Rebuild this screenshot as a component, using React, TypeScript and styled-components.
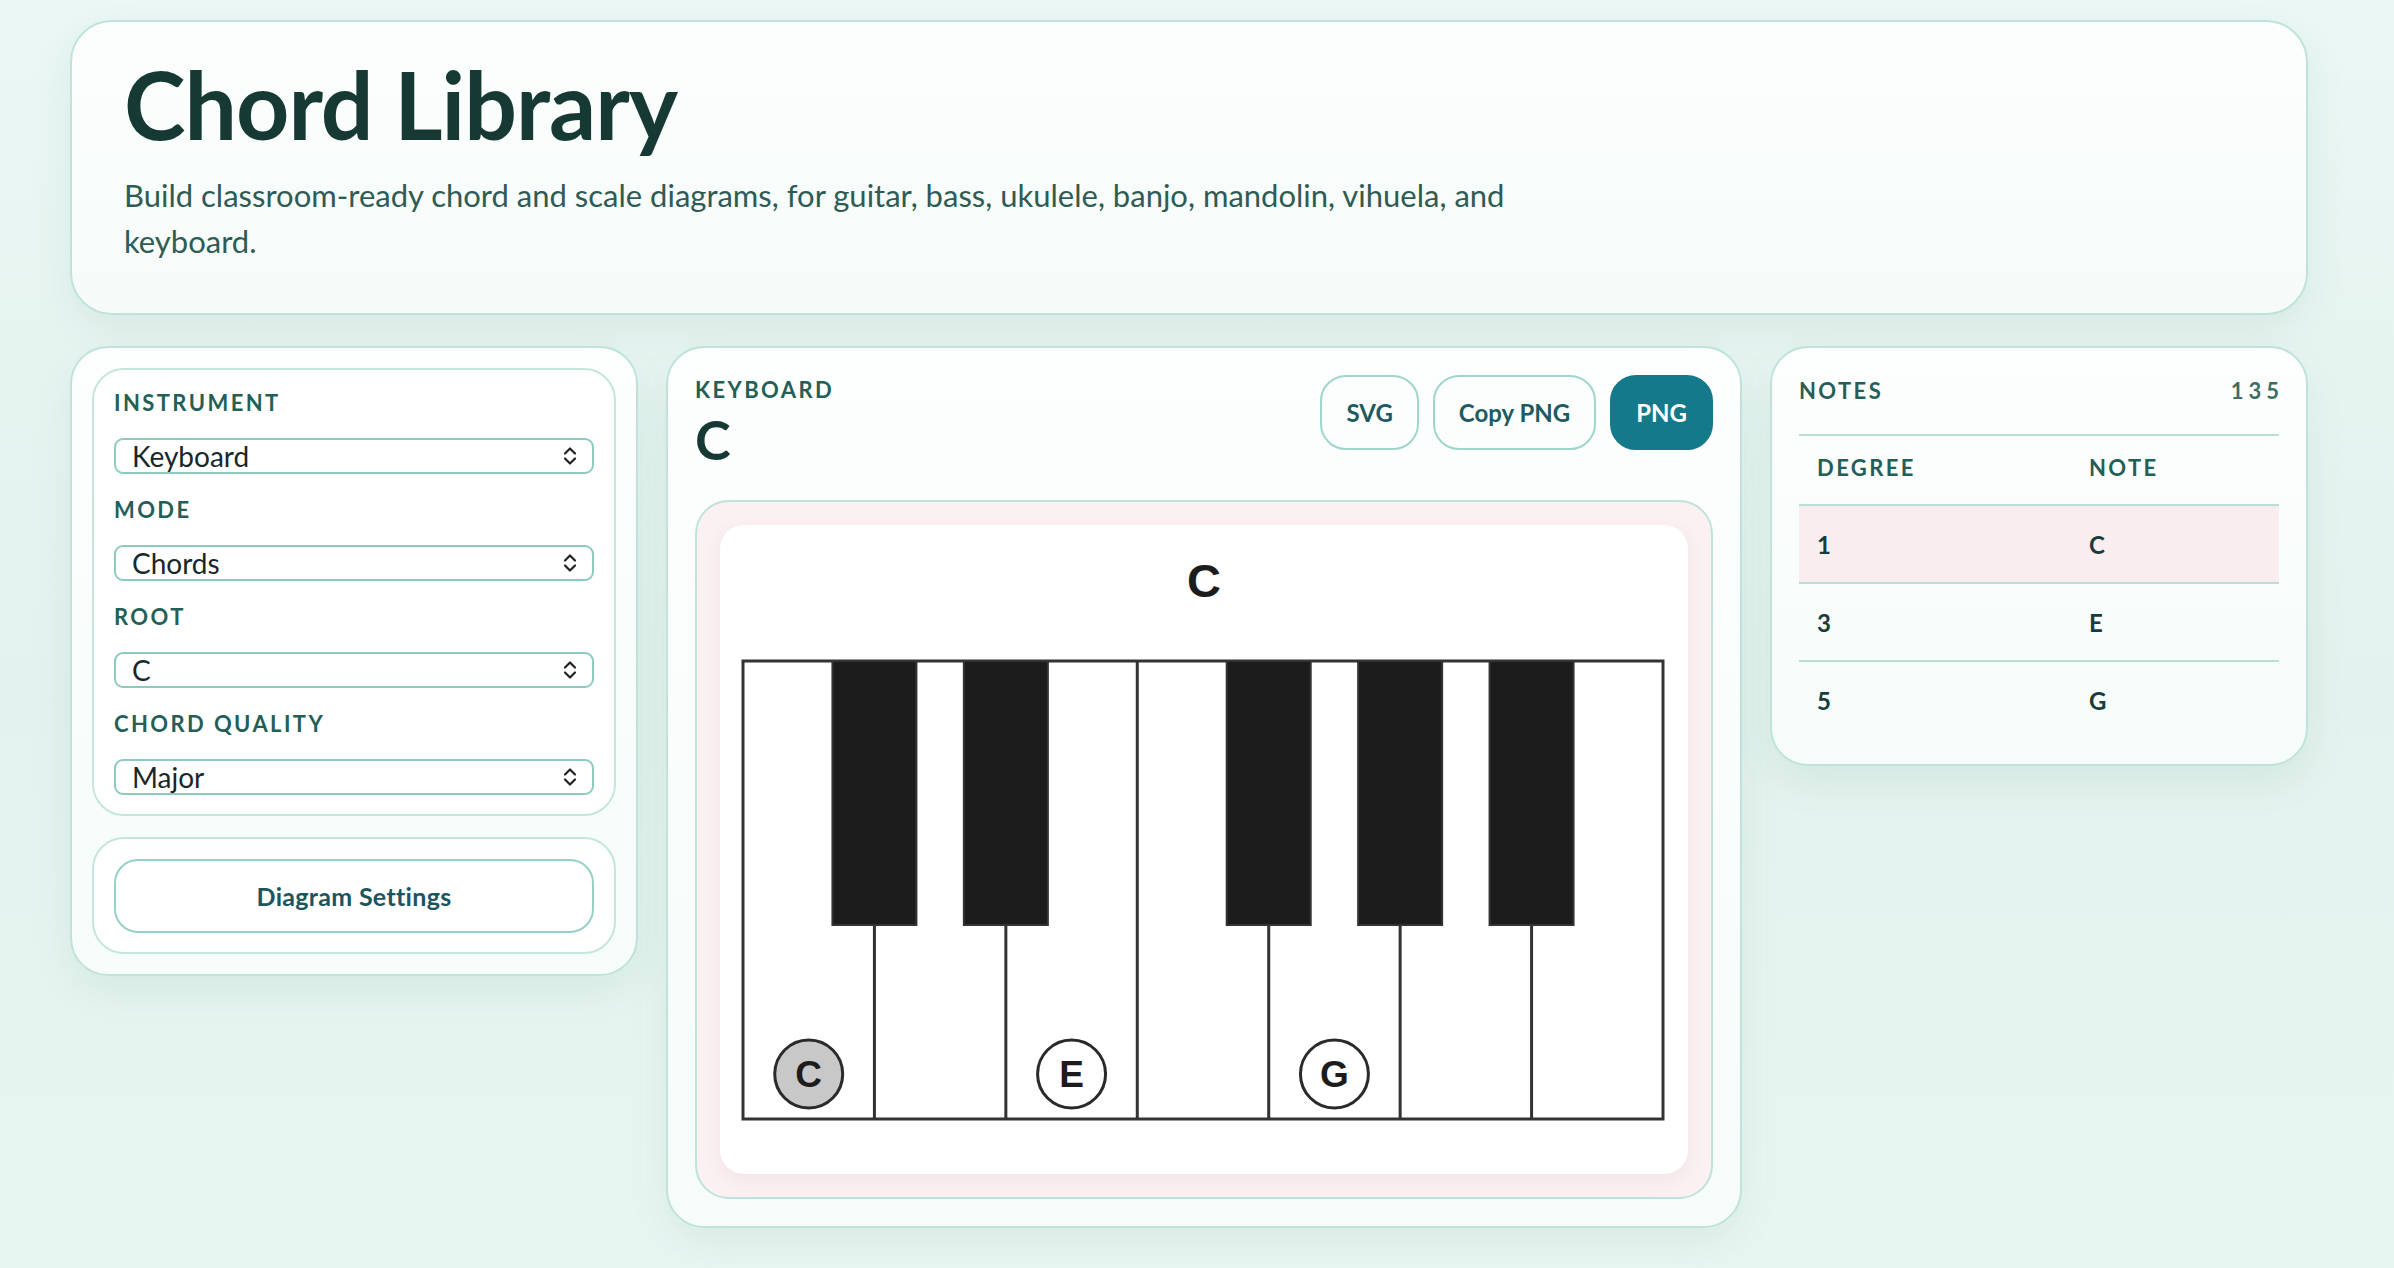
import React from "react";
import styled, { createGlobalStyle } from "styled-components";

// keyboard geometry, all in svg units of the diagram card
const KEY_W = 920 / 7;
const KB_X = 23;
const KB_Y = 136;
const KB_H = 458;
const BLACK_W = 84;
const BLACK_H = 264;
const BLACK_AFTER = [1, 2, 4, 5, 6];

const GlobalStyle = createGlobalStyle`
  html, body {
    margin: 0;
    padding: 0;
  }
  body {
    min-height: 100vh;
    font-family: Lato, "Noto Sans", sans-serif;
    color: #163a33;
    background: linear-gradient(180deg, #eaf7f4 0%, #e3f2ee 55%, #e8f6f2 100%);
  }
`;

const Page = styled.main`
  width: 2238px;
  padding: 20px 0 40px 70px;
  display: flex;
  flex-direction: column;
  gap: 31px;
`;

const Hero = styled.header`
  border: 2px solid #bfe3da;
  border-radius: 42px;
  background: linear-gradient(180deg, #fbfefd 0%, #f6fbfa 100%);
  padding: 31px 50px 49px 52px;
  box-shadow: 0 16px 40px rgba(40, 110, 95, 0.08);
`;

const Title = styled.h1`
  margin: 0;
  font-size: 93px;
  line-height: 1.1;
  font-weight: 700;
  letter-spacing: -1px;
  color: #163a33;
`;

const Lead = styled.p`
  margin: 17px 0 0;
  max-width: 1440px;
  font-size: 31px;
  line-height: 46px;
  color: #2e5b53;
`;

const Columns = styled.div`
  display: grid;
  grid-template-columns: 568px 1076px 538px;
  column-gap: 28px;
  align-items: start;
`;

const Panel = styled.section<{ $pad: string }>`
  border: 2px solid #bfe3da;
  border-radius: 38px;
  background: linear-gradient(180deg, #fdfefe 0%, #f5fcfa 100%);
  padding: ${(p) => p.$pad};
  box-shadow: 0 16px 40px rgba(40, 110, 95, 0.08);
`;

const Stack = styled.div`
  display: flex;
  flex-direction: column;
  gap: 21px;
`;

const InnerCard = styled.div`
  border: 2px solid #c4e6de;
  border-radius: 32px;
  background: #ffffff;
  padding: 20px 20px 19px;
`;

const Field = styled.div`
  display: flex;
  flex-direction: column;
  gap: 22px;
  & + & {
    margin-top: 23px;
  }
`;

const Label = styled.div`
  font-size: 22px;
  line-height: 26px;
  font-weight: 700;
  letter-spacing: 2.4px;
  text-transform: uppercase;
  color: #245f57;
`;

const SelectBox = styled.div`
  height: 36px;
  box-sizing: border-box;
  border: 2px solid #8ccbbf;
  border-radius: 9px;
  background: #ffffff;
  padding: 0 14px 0 16px;
  display: flex;
  align-items: center;
  justify-content: space-between;
  font-size: 28px;
  color: #18272a;
`;

const WideButton = styled.button`
  width: 100%;
  height: 74px;
  border: 2px solid #97d0c5;
  border-radius: 24px;
  background: #ffffff;
  font-family: inherit;
  font-size: 25px;
  font-weight: 700;
  letter-spacing: 0.3px;
  color: #1b5560;
`;

const DiagramHead = styled.div`
  display: flex;
  justify-content: space-between;
  align-items: flex-start;
`;

const HeadText = styled.div`
  display: flex;
  flex-direction: column;
  gap: 8px;
  padding-top: 2px;
`;

const ChordName = styled.div`
  font-size: 54px;
  line-height: 57px;
  font-weight: 700;
  color: #163a33;
`;

const Actions = styled.div`
  display: flex;
  gap: 14px;
`;

const ActionButton = styled.button<{ $primary?: boolean }>`
  height: 75px;
  padding: 0 24px;
  border-radius: 26px;
  border: 2px solid ${(p) => (p.$primary ? "#147a8b" : "#9fd6cb")};
  background: ${(p) => (p.$primary ? "#147a8b" : "#fbfefd")};
  color: ${(p) => (p.$primary ? "#ffffff" : "#1e5a62")};
  font-family: inherit;
  font-size: 24px;
  font-weight: 700;
`;

const Frame = styled.div`
  margin-top: 32px;
  border: 2px solid #bfe3da;
  border-radius: 34px;
  background: #fbf0f2;
  padding: 23px;
`;

const Sheet = styled.div`
  border-radius: 24px;
  background: #ffffff;
  box-shadow: 0 6px 18px rgba(120, 80, 90, 0.07);
  svg {
    display: block;
    width: 100%;
    height: auto;
  }
`;

const NotesHead = styled.div`
  display: flex;
  justify-content: space-between;
  align-items: center;
  padding-bottom: 30px;
  border-bottom: 2px solid #b8e0d7;
`;

const Degrees = styled.div`
  font-size: 22px;
  line-height: 26px;
  font-weight: 700;
  letter-spacing: 5px;
  margin-right: -5px;
  color: #3d6e66;
`;

const Row = styled.div<{ $head?: boolean; $hot?: boolean; $last?: boolean }>`
  display: grid;
  grid-template-columns: 272px 1fr;
  align-items: center;
  height: ${(p) => (p.$head ? "62px" : "76px")};
  padding-bottom: ${(p) => (p.$head ? "6px" : "0")};
  background: ${(p) => (p.$hot ? "#f9edf0" : "transparent")};
  border-bottom: ${(p) => (p.$last ? "none" : "2px solid #b8e0d7")};
`;

const Cell = styled.div<{ $head?: boolean }>`
  padding-left: 18px;
  font-size: ${(p) => (p.$head ? "22px" : "24px")};
  font-weight: 700;
  letter-spacing: ${(p) => (p.$head ? "2.4px" : "0")};
  color: ${(p) => (p.$head ? "#245f57" : "#173d3a")};
`;

const Chevrons = () => (
  <svg width="16" height="22" viewBox="0 0 16 22" fill="none" stroke="#222" strokeWidth="2.2" strokeLinecap="round" strokeLinejoin="round">
    <path d="M3 8.5 L8 3.5 L13 8.5" />
    <path d="M3 13.5 L8 18.5 L13 13.5" />
  </svg>
);

const fields = [
  { label: "Instrument", value: "Keyboard" },
  { label: "Mode", value: "Chords" },
  { label: "Root", value: "C" },
  { label: "Chord Quality", value: "Major" },
];

const marks = [
  { key: 0, note: "C", root: true },
  { key: 2, note: "E", root: false },
  { key: 4, note: "G", root: false },
];

const notes = [
  { degree: "1", note: "C" },
  { degree: "3", note: "E" },
  { degree: "5", note: "G" },
];

const Keyboard = () => (
  <svg viewBox="0 0 968 649">
    <text x="484" y="72" textAnchor="middle" fontFamily="'Liberation Sans', Arial, sans-serif" fontWeight="700" fontSize="47" fill="#1c1c1c">
      C
    </text>
    <rect x={KB_X} y={KB_Y} width={920} height={KB_H} fill="#ffffff" stroke="#333" strokeWidth="3" />
    {Array.from({ length: 6 }, (_, i) => (
      <line key={i} x1={KB_X + KEY_W * (i + 1)} y1={KB_Y} x2={KB_X + KEY_W * (i + 1)} y2={KB_Y + KB_H} stroke="#333" strokeWidth="3" />
    ))}
    {BLACK_AFTER.map((i) => (
      <rect key={i} x={KB_X + KEY_W * i - BLACK_W / 2} y={KB_Y} width={BLACK_W} height={BLACK_H} fill="#1c1c1c" stroke="#333" strokeWidth="2" />
    ))}
    {marks.map((m) => {
      const cx = KB_X + KEY_W * (m.key + 0.5);
      return (
        <g key={m.note}>
          <circle cx={cx} cy={549} r={34} fill={m.root ? "#c8c8c8" : "#ffffff"} stroke="#2a2a2a" strokeWidth="3" />
          <text x={cx} y={562} textAnchor="middle" fontFamily="'Liberation Sans', Arial, sans-serif" fontWeight="700" fontSize="37" fill="#1c1c1c">
            {m.note}
          </text>
        </g>
      );
    })}
  </svg>
);

export default function App() {
  return (
    <>
      <GlobalStyle />
      <Page>
        <Hero>
          <Title>Chord Library</Title>
          <Lead>
            Build classroom-ready chord and scale diagrams, for guitar, bass, ukulele, banjo, mandolin, vihuela, and keyboard.
          </Lead>
        </Hero>

        <Columns>
          <Panel $pad="20px">
            <Stack>
              <InnerCard>
                {fields.map((f) => (
                  <Field key={f.label}>
                    <Label>{f.label}</Label>
                    <SelectBox>
                      <span>{f.value}</span>
                      <Chevrons />
                    </SelectBox>
                  </Field>
                ))}
              </InnerCard>
              <InnerCard>
                <WideButton>Diagram Settings</WideButton>
              </InnerCard>
            </Stack>
          </Panel>

          <Panel $pad="27px">
            <DiagramHead>
              <HeadText>
                <Label>Keyboard</Label>
                <ChordName>C</ChordName>
              </HeadText>
              <Actions>
                <ActionButton>SVG</ActionButton>
                <ActionButton>Copy PNG</ActionButton>
                <ActionButton $primary>PNG</ActionButton>
              </Actions>
            </DiagramHead>
            <Frame>
              <Sheet>
                <Keyboard />
              </Sheet>
            </Frame>
          </Panel>

          <Panel $pad="30px 27px 26px">
            <NotesHead>
              <Label>Notes</Label>
              <Degrees>135</Degrees>
            </NotesHead>
            <Row $head>
              <Cell $head>DEGREE</Cell>
              <Cell $head>NOTE</Cell>
            </Row>
            {notes.map((n, i) => (
              <Row key={n.degree} $hot={i === 0} $last={i === notes.length - 1}>
                <Cell>{n.degree}</Cell>
                <Cell>{n.note}</Cell>
              </Row>
            ))}
          </Panel>
        </Columns>
      </Page>
    </>
  );
}
